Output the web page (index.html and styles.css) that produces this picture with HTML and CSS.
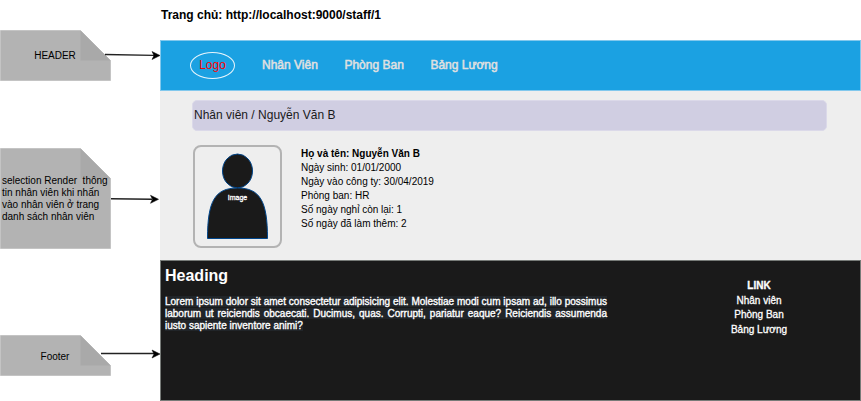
FILE: index.html
```html
<!DOCTYPE html>
<html lang="vi">
<head>
<meta charset="utf-8">
<title>Trang chủ</title>
<link rel="stylesheet" href="styles.css">
</head>
<body>
<div class="page">
  <aside class="notes">
    <div class="note note-header">
      <svg width="161" height="52" viewBox="0 0 161 52">
        <path class="sheet" d="M.5 .5H80.500L110.500 30.500V50.500H.5Z"/>
        <path class="fold" d="M80.500 .5V30.500H110.500Z"/>
        <path class="line" d="M105 24.500L154 25.400"/>
        <path class="tip" d="M160 25.500L152 29.500L154 25.500L152 21.500Z"/>
      </svg>
      <p>HEADER</p>
    </div>
    <div class="note note-section">
      <svg width="161" height="102" viewBox="0 0 161 102">
        <path class="sheet" d="M.5 .5H80.500L110.500 30.500V100.500H.5Z"/>
        <path class="fold" d="M80.500 .5V30.500H110.500Z"/>
        <path class="line" d="M111 50.700L152 51.200"/>
        <path class="tip" d="M158.500 51.300L150.500 55.300L152.500 51.300L150.500 47.300Z"/>
      </svg>
      <p>selection Render&nbsp; thông<br>tin nhân viên khi nhấn<br>vào nhân viên ở trang<br>danh sách nhân viên</p>
    </div>
    <div class="note note-footer">
      <svg width="161" height="42" viewBox="0 0 161 42">
        <path class="sheet" d="M.5 .5H80.500L110.500 30.500V40.500H.5Z"/>
        <path class="fold" d="M80.500 .5V30.500H110.500Z"/>
        <path class="line" d="M101 18.500H154"/>
        <path class="tip" d="M160 19L152 23L154 19L152 15Z"/>
      </svg>
      <p>Footer</p>
    </div>
  </aside>
  <main class="site">
    <h1 class="address">Trang chủ: http://localhost:9000/staff/1</h1>
    <header class="topbar">
      <div class="logo">Logo</div>
      <nav class="menu"><span>Nhân Viên</span><span>Phòng Ban</span><span>Bảng Lương</span></nav>
    </header>
    <section class="content">
      <div class="breadcrumb">Nhân viên / Nguyễn Văn B</div>
      <div class="profile">
        <div class="photo">
          <svg width="85" height="98" viewBox="1 0 85 98">
            <ellipse class="person" cx="43.500" cy="24" rx="15" ry="17"/>
            <path class="person" d="M13.500 91.500C13.500 54 21 41 43.500 41S73.500 54 73.500 91.500Z"/>
          </svg>
          <span>Image</span>
        </div>
        <div class="details">
          <b>Họ và tên: Nguyễn Văn B</b>
          <div>Ngày sinh: 01/01/2000</div>
          <div>Ngày vào công ty: 30/04/2019</div>
          <div>Phòng ban: HR</div>
          <div>Số ngày nghỉ còn lại: 1</div>
          <div>Số ngày đã làm thêm: 2</div>
        </div>
      </div>
    </section>
    <footer class="footer">
      <div class="about">
        <h2>Heading</h2>
        <p><span>Lorem ipsum dolor sit amet consectetur adipisicing elit. Molestiae modi cum ipsam ad, illo possimus laborum ut reiciendis obcaecati. Ducimus, quas. Corrupti, pariatur eaque? Reiciendis assumenda iusto sapiente inventore animi?</span></p>
      </div>
      <div class="links"><b>LINK</b><span>Nhân viên</span><span>Phòng Ban</span><span>Bảng Lương</span></div>
    </footer>
  </main>
</div>
</body>
</html>
```
FILE: styles.css
```css
* { box-sizing: border-box; }
body { margin: 0; background: #fff; color: #000; font-family: "Liberation Sans", Arial, sans-serif; }
h1, h2, p { margin: 0; }
svg { display: block; }
.page { display: grid; grid-template-columns: 160px 701px; height: 401px; overflow: hidden; }

.notes { display: flex; flex-direction: column; padding-top: 30px; }
.note { display: grid; align-items: center; font-size: 10px; line-height: 12px; }
.note > * { grid-area: 1 / 1; }
.note svg { overflow: visible; }
.note p { width: 110px; text-align: center; white-space: nowrap; }
.note-section { margin-top: 66px; }
.note-section p { text-align: left; padding-left: 2px; }
.note-footer { margin-top: 85px; }
.note-footer p { padding-top: 2px; }
.sheet { fill: #b3b3b3; stroke: #c4c4c4; }
.fold { fill: #a9a9a9; }
.line { fill: none; stroke: #222; stroke-width: 1.4; }
.tip { fill: #000; stroke: #000; stroke-width: .5; }

.site { display: grid; grid-template-rows: 40px 51px 169px 141px; }
.address { padding: 7px 0 0 1px; font-size: 12px; line-height: 16px; }
.topbar { display: flex; align-items: flex-start; padding: 11px 0 0 29px; background: #1ba1e2; border: 1px solid #82c8ed; }
.logo { width: 45px; height: 27px; border: 1px solid #e8f5fc; border-radius: 50%; color: #f00; font-size: 12px; line-height: 24px; text-align: center; }
.menu { display: flex; gap: 26.6px; margin: 5px 0 0 27px; color: #e0e0e0; font-size: 12px; line-height: 16px; -webkit-text-stroke: .5px #e0e0e0; }

.content { padding: 9px 34px 0 32px; background: #eee; }
.breadcrumb { height: 31px; padding-left: 1px; background: #d0cee2; border: 1px solid #dbd9e9; border-radius: 5px; color: #1a1a1a; font-size: 12px; line-height: 29px; }
.profile { display: flex; margin-top: 14px; padding-left: 1px; }
.photo { display: grid; width: 89px; height: 103px; border: 2px solid #b3b3b3; border-radius: 8px; }
.photo > * { grid-area: 1 / 1; }
.photo span { padding-top: 46px; color: #fff; font-size: 7px; line-height: 10px; text-align: center; -webkit-text-stroke: .3px #fff; }
.person { fill: #1a1a1a; stroke: #00468c; }
.details { margin: 2px 0 0 19px; font-size: 10px; line-height: 14px; }
.details b { display: block; }

.footer { display: flex; background: #1a1a1a; border: 1px solid #777b78; color: #fff; }
.about { width: 442px; margin-left: 4px; }
.about h2 { padding-top: 6px; font-size: 16px; line-height: 18px; }
.about p { margin-top: 11px; font-size: 10px; line-height: 12px; text-align: justify; -webkit-text-stroke: .35px #fff; }
.about p span { background: #212529; }
.links { display: flex; flex-direction: column; width: 60px; margin: 18px 0 0 122px; font-size: 10px; line-height: 14.7px; text-align: center; -webkit-text-stroke: .3px #fff; }
```
